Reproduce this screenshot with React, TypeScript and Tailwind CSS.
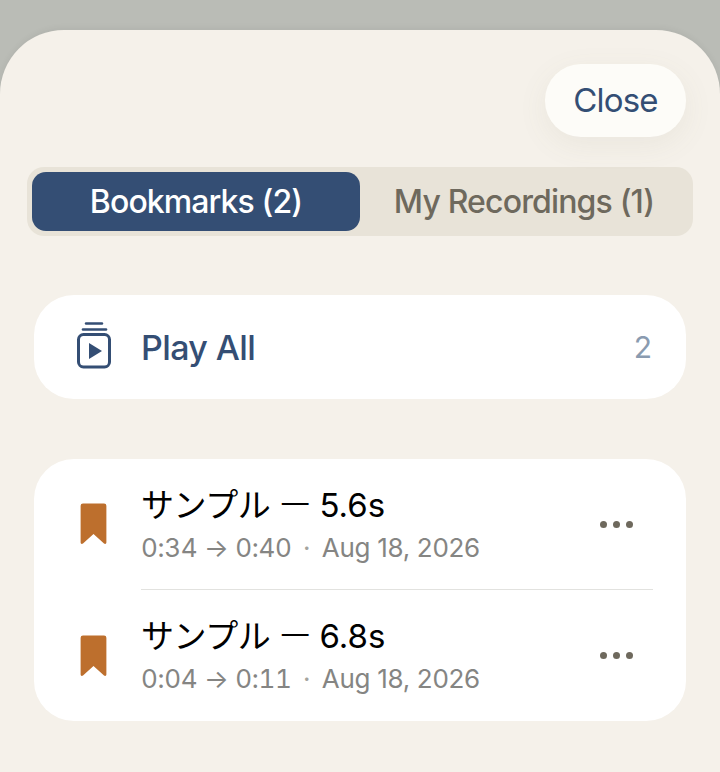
const sans = 'font-["Inter","Noto_Sans_CJK_JP",sans-serif]';

function BookmarkIcon() {
  return (
    <svg width="27" height="42" viewBox="0 0 28 44" className="shrink-0">
      <path
        d="M3 0.5H25A2.5 2.5 0 0 1 27.5 3V41.5C27.5 43 26 43.3 25 42.4L14 32.5L3 42.4C2 43.3 0.5 43 0.5 41.5V3A2.5 2.5 0 0 1 3 0.5Z"
        fill="#bd6f2d"
      />
    </svg>
  );
}

function PlayAllIcon() {
  return (
    <svg width="36" height="50" viewBox="0 0 36 50" fill="none" className="shrink-0">
      <path d="M10 1.5H26" stroke="#344e74" strokeWidth="2.4" strokeLinecap="round" />
      <path d="M7 7.5H30" stroke="#344e74" strokeWidth="2.6" strokeLinecap="round" />
      <rect x="2.5" y="12.5" width="31" height="32.5" rx="5" stroke="#344e74" strokeWidth="3" />
      <path d="M13 21V37L26 29Z" fill="#344e74" />
    </svg>
  );
}

function MoreDots() {
  return (
    <div className="flex items-center gap-[6px]">
      <span className="h-[7px] w-[7px] rounded-full bg-[#6e695d]" />
      <span className="h-[7px] w-[7px] rounded-full bg-[#6e695d]" />
      <span className="h-[7px] w-[7px] rounded-full bg-[#6e695d]" />
    </div>
  );
}

function BookmarkRow({ seconds, range, rowClass }: { seconds: string; range: string; rowClass: string }) {
  return (
    <div className={`flex items-center pl-[46px] pr-[53px] ${rowClass}`}>
      <BookmarkIcon />
      <div className="ml-[34px] flex-1">
        <div className="h-[40px] text-[33px] leading-[40px] tracking-[-0.4px] text-black">
          サンプル <span className='align-[-2px] font-["Roboto",sans-serif] text-[41px] font-light leading-none'>—</span>{" "}
          <span className="tracking-[0px]">{seconds}</span>
        </div>
        <div className="mt-[7px] text-[26px] leading-[32px] tracking-[-0.3px] text-[#858583]">
          <span className="tabular-nums">{range}</span> <span className="mx-[4.5px] text-[#a3a39e]">·</span> Aug 18, 2026
        </div>
      </div>
      <MoreDots />
    </div>
  );
}

export default function App() {
  return (
    <div className={`h-[772px] w-[720px] overflow-hidden bg-[#babcb6] pt-[30px] ${sans}`}>
      <div className="h-[742px] rounded-t-[64px] bg-[#f5f1ea] px-[34px] shadow-[0_-2px_6px_rgba(0,0,0,0.05)]">
        <div className="flex justify-end pt-[34px]">
          <button className="flex h-[73px] w-[141px] items-center justify-center rounded-[36px] bg-[#fdfcf8] text-[33px] tracking-[-0.85px] text-[#344e74] shadow-[0_8px_30px_rgba(120,110,90,0.08)]">
            Close
          </button>
        </div>

        <div className="-mx-[7px] mt-[30px] flex h-[69px] rounded-[17px] bg-[#e8e3d8] p-[5px]">
          <div className="flex w-[328px] items-center justify-center rounded-[14px] bg-[#344e74] text-[32px] font-[450] tracking-[-0.9px] text-white">
            Bookmarks (2)
          </div>
          <div className="flex flex-1 items-center justify-center text-[32px] font-[450] tracking-[-0.85px] text-[#6e695d]">
            My Recordings (1)
          </div>
        </div>

        <div className="mt-[59px] flex h-[104px] items-center rounded-[40px] bg-white pl-[42px] pr-[34px]">
          <PlayAllIcon />
          <span className="ml-[29px] flex-1 pt-[1px] text-[34px] font-medium tracking-[-0.6px] text-[#344e74]">Play All</span>
          <span className="text-[30px] text-[#8a9bb0]">2</span>
        </div>

        <div className="mt-[60px] rounded-[40px] bg-white">
          <BookmarkRow seconds="5.6s" range="0:34 → 0:40" rowClass="h-[130px]" />
          <div className="ml-[107px] mr-[33px] h-[1px] bg-[#e2e2df]" />
          <BookmarkRow seconds="6.8s" range="0:04 → 0:11" rowClass="h-[131px]" />
        </div>
      </div>
    </div>
  );
}
